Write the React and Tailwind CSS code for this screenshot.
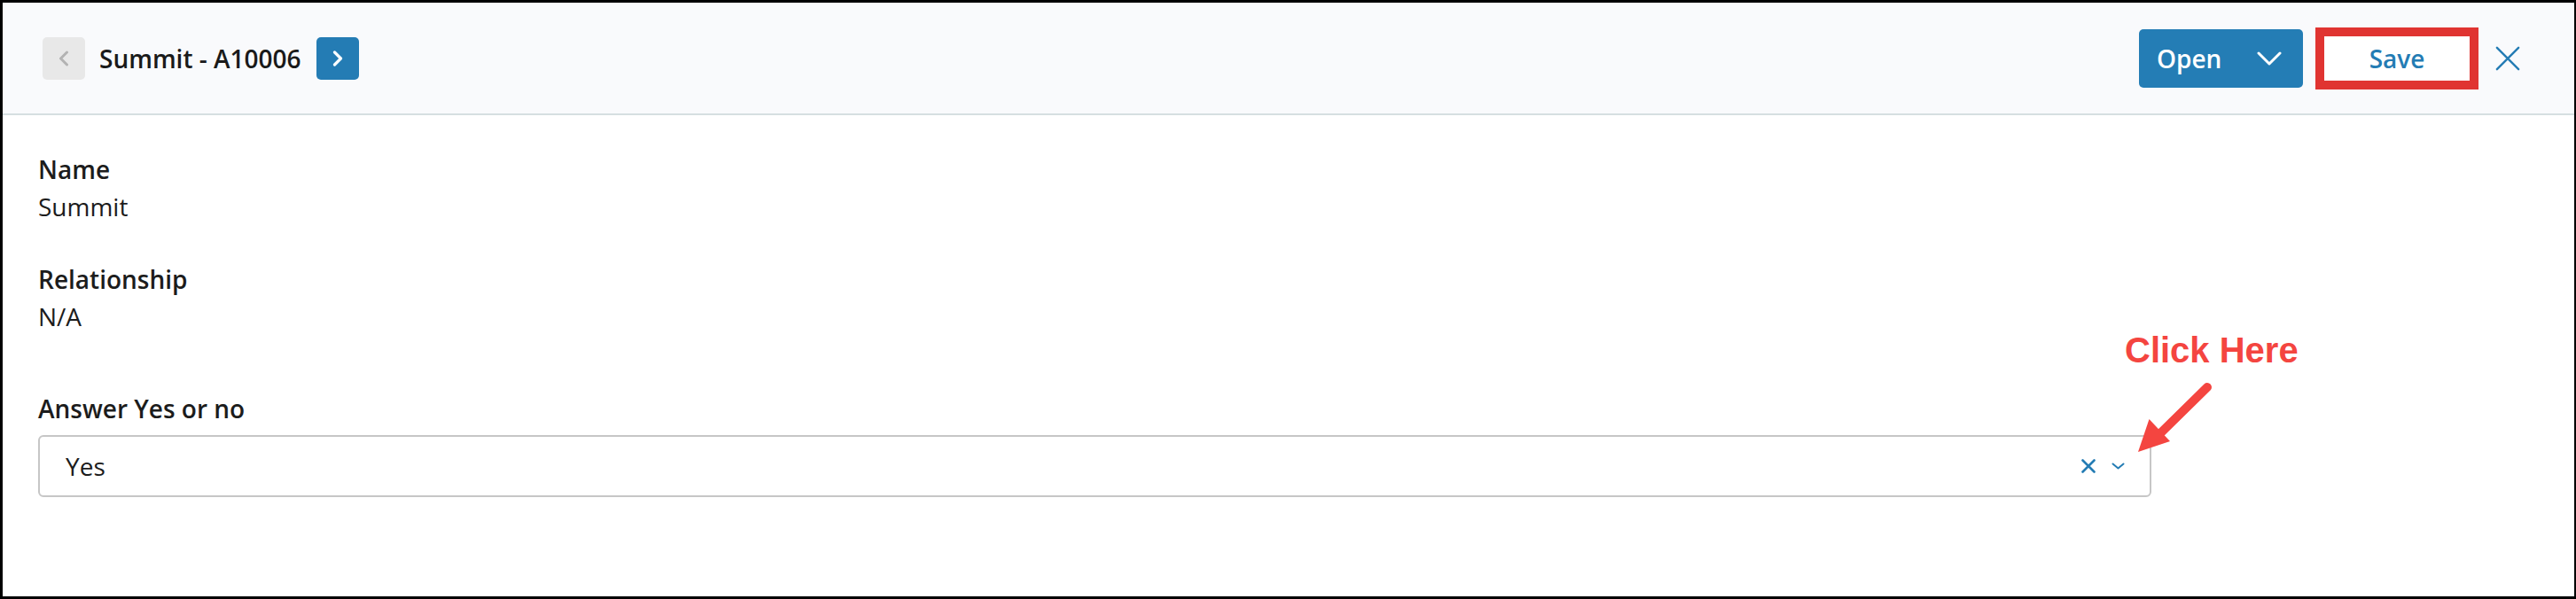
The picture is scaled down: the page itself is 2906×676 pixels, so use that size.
import React from "react";

const font = { fontFamily: '"Open Sans", "Noto Sans", sans-serif' };

export default function App() {
  return (
    <div
      className="relative w-[2906px] h-[676px] bg-white border-t-[3px] border-b-[3px] border-l-[3px] border-r-2 border-black flex flex-col text-[#1c1c1c]"
      style={font}
    >
      {/* header */}
      <div className="h-[127px] shrink-0 bg-[#f9fafc] border-b-2 border-[#d6dfe1] flex items-center justify-between pl-[45px] pr-[61px]">
        <div className="flex items-center">
          <button className="w-[48px] h-[48px] rounded-[5px] bg-[#e8e8e8] flex items-center justify-center">
            <svg width="14" height="18" viewBox="0 0 14 18" fill="none">
              <path d="M10.5 2 L3.5 9 L10.5 16" stroke="#b3b3b3" strokeWidth="3" strokeLinecap="round" strokeLinejoin="round" />
            </svg>
          </button>
          <span className="ml-[16px] text-[28px] font-semibold leading-[40px] text-[#1a1a1a]">Summit - A10006</span>
          <button className="ml-[17px] w-[48px] h-[48px] rounded-[5px] bg-[#247cb4] flex items-center justify-center">
            <svg width="14" height="18" viewBox="0 0 14 18" fill="none">
              <path d="M3.5 2 L10.5 9 L3.5 16" stroke="#ffffff" strokeWidth="3.2" strokeLinecap="round" strokeLinejoin="round" />
            </svg>
          </button>
        </div>
        <div className="flex items-center">
          <button className="w-[185px] h-[66px] rounded-[5px] bg-[#247db5] flex items-center justify-between pl-[20px] pr-[24px] text-white text-[28px] font-semibold">
            <span>Open</span>
            <svg width="28" height="16" viewBox="0 0 28 16" fill="none">
              <path d="M2 2 L14 14 L26 2" stroke="#ffffff" strokeWidth="3" strokeLinecap="round" strokeLinejoin="round" />
            </svg>
          </button>
          <button className="ml-[14px] w-[184px] h-[70px] border-[10px] border-[#e03431] bg-white flex items-center justify-center text-[28px] font-semibold text-[#247cb4]">
            Save
          </button>
          <button className="ml-[19px] w-[28px] h-[28px] flex items-center justify-center">
            <svg width="30" height="30" viewBox="0 0 30 30" fill="none">
              <path d="M2 2 L28 28 M28 2 L2 28" stroke="#247cb4" strokeWidth="2.6" strokeLinecap="round" />
            </svg>
          </button>
        </div>
      </div>

      {/* body */}
      <div className="flex flex-col pl-[40px] pt-[40px]">
        <div className="flex flex-col">
          <span className="text-[28px] leading-[42px] font-semibold">Name</span>
          <span className="text-[28px] leading-[42px]">Summit</span>
        </div>
        <div className="flex flex-col mt-[40px]">
          <span className="text-[28px] leading-[42px] font-semibold">Relationship</span>
          <span className="text-[28px] leading-[42px]">N/A</span>
        </div>
        <div className="flex flex-col mt-[62px]">
          <span className="text-[28px] leading-[42px] font-semibold">Answer Yes or no</span>
          <div className="mt-[9px] w-[2384px] h-[70px] border-2 border-[#c6c6c6] rounded-[6px] flex items-center justify-between pl-[29px] pr-[28px]">
            <span className="text-[28px] leading-[40px]">Yes</span>
            <div className="flex items-center gap-[18px]">
              <svg width="16" height="16" viewBox="0 0 16 16" fill="none">
                <path d="M1.5 1.5 L14.5 14.5 M14.5 1.5 L1.5 14.5" stroke="#247cb4" strokeWidth="2.6" strokeLinecap="round" />
              </svg>
              <svg width="15" height="8" viewBox="0 0 15 8" fill="none">
                <path d="M1.5 1.5 L7.5 6.5 L13.5 1.5" stroke="#247cb4" strokeWidth="2" strokeLinecap="round" strokeLinejoin="round" />
              </svg>
            </div>
          </div>
        </div>
      </div>

      {/* annotation overlay */}
      <div
        className="absolute left-[2394px] top-[372px] text-[40px] leading-[40px] font-bold text-[#f44540]"
        style={{ fontFamily: '"Liberation Sans", Arial, sans-serif' }}
      >
        Click Here
      </div>
      <svg className="absolute left-[2400px] top-[420px]" width="100" height="100" viewBox="0 0 100 100" fill="none">
        <path d="M87 14 L28 72" stroke="#f44540" strokeWidth="10" strokeLinecap="round" />
        <path d="M9 87 L21.5 50 L45 75 Z" fill="#f44540" />
      </svg>
    </div>
  );
}
